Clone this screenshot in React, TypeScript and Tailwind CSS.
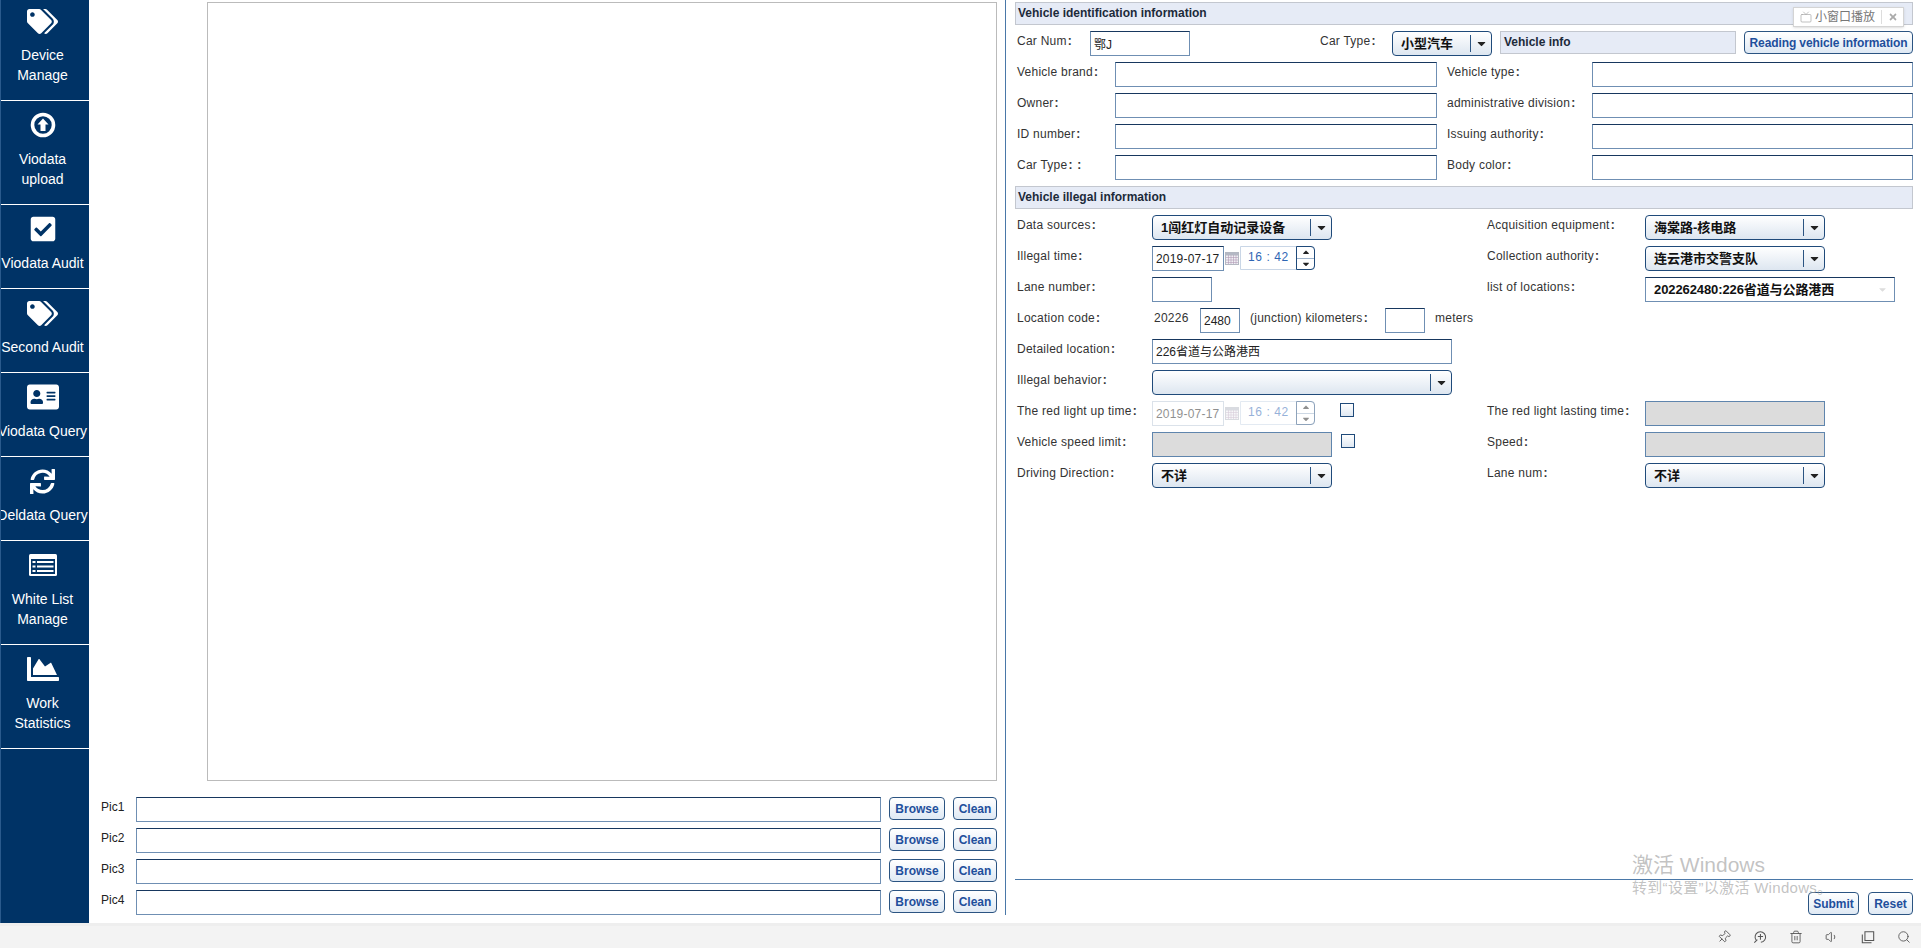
import React from "react";
import { FaTags, FaCheckSquare, FaAddressCard, FaSync, FaChartArea, FaCaretDown, FaCaretUp, FaTimes } from "react-icons/fa";
import { Pin, Trash2, Volume1, Search, Tv } from "lucide-react";

const RingUp = () => (
  <svg viewBox="0 0 26 26" className="w-[26px] h-[26px]">
    <circle cx="13" cy="13" r="10.5" fill="none" stroke="white" strokeWidth="3.6" />
    <path d="M13 6.5 L18.5 12.5 H15.5 V19 H10.5 V12.5 H7.5 Z" fill="white" />
  </svg>
);
const ListBox = () => (
  <svg viewBox="0 0 28 22" className="w-[28px] h-[22px]">
    <rect x="0" y="0" width="28" height="22" rx="1.5" fill="white" />
    <rect x="2" y="5" width="24" height="15" fill="#003366" />
    <path d="M3.5 7h3v2h-3zM8 7h16.500v2H8zM3.500 11.500h3v2h-3zM8 11.500h16.500v2H8zM3.500 16h3v2h-3zM8 16h16.500v2H8z" fill="white" />
  </svg>
);

const nav: { icon: React.ReactNode; lines: string[] }[] = [
  { icon: <FaTags size={31} />, lines: ["Device", "Manage"] },
  { icon: <RingUp />, lines: ["Viodata", "upload"] },
  { icon: <FaCheckSquare size={28} />, lines: ["Viodata Audit"] },
  { icon: <FaTags size={31} />, lines: ["Second Audit"] },
  { icon: <FaAddressCard size={32} />, lines: ["Viodata Query"] },
  { icon: <FaSync size={25} />, lines: ["Deldata Query"] },
  { icon: <ListBox />, lines: ["White List", "Manage"] },
  { icon: <FaChartArea size={32} />, lines: ["Work", "Statistics"] },
];

const inputCls = "h-[25px] border border-[#6f8fb3] border-t-[#17375e] bg-white px-[3px] text-[12px] leading-[25px] text-[#222] shrink-0";
const btnCls = "h-[23px] shrink-0 rounded-[4px] border border-[#2b5482] bg-gradient-to-b from-white to-[#dfe9f4] text-[12px] font-bold text-[#1f4f9c] text-center pt-px";

const Label = ({ w, children, className = "" }: { w: string; children: React.ReactNode; className?: string }) => (
  <div className={`${w} shrink-0 h-5 leading-5 text-[12px] text-[#333] tracking-[0.25px] whitespace-nowrap ${className}`}>{children}</div>
);
const Colon = () => <b className="ml-[1px]">:</b>;

const Select = ({ w, text = "" }: { w: string; text?: string }) => (
  <div className={`${w} h-[25px] shrink-0 flex items-center rounded-[4px] border border-[#1f4a7a] bg-gradient-to-b from-white to-[#dde6f0]`}>
    <div className="flex-1 pl-[8px] pt-px text-[13px] font-bold text-[#111] whitespace-nowrap overflow-hidden">{text}</div>
    <div className="w-[21px] h-[17px] border-l border-[#2b5482] flex items-center justify-center text-[#222]"><FaCaretDown size={13} /></div>
  </div>
);

const Calendar = () => (
  <svg viewBox="0 0 14 13" className="w-[14px] h-[13px] mx-[1px] mt-[6px]">
    <rect x="0.500" y="0.500" width="13" height="12" fill="#f0f0f4" stroke="#b4b8c2" />
    <rect x="1" y="1" width="12" height="2.500" fill="#b4b8c4" />
    <path d="M1 5.500h12M1 8h12M1 10.500h12M3.500 3v9M6 3v9M8.500 3v9M11 3v9" stroke="#b29ab6" strokeWidth="0.600" />
  </svg>
);

const DateTime = ({ dim }: { dim?: boolean }) => (
  <div className={`flex shrink-0 ${dim ? "opacity-50" : ""}`}>
    <div className={`w-[72px] h-[25px] border ${dim ? "border-[#b9c6d6]" : "border-[#6f8fb3] border-t-[#17375e]"} pl-[3px] text-[12px] leading-[25px] text-[#222] tracking-[0.2px] whitespace-nowrap`}>2019-07-17</div>
    <Calendar />
    <div className="w-[75px] h-[24px] flex border border-[#c9d6e6] rounded-r-[4px]">
      <div className="w-[55px] pl-[7px] text-[12px] leading-[20px] text-[#2f66b4] tracking-[0.6px] whitespace-pre">16 : 42</div>
      <div className="flex-1 -my-px -mr-px flex flex-col items-center justify-center border border-[#1f4a7a] rounded-r-[4px] text-[#222]">
        <div className="h-[11px] flex items-center"><FaCaretUp size={10} /></div>
        <div className="w-full h-px bg-[#9db2cb]" />
        <div className="h-[11px] flex items-center"><FaCaretDown size={10} /></div>
      </div>
    </div>
  </div>
);

const Check = () => <div className="w-[14px] h-[14px] mt-[2px] ml-[9px] border border-[#1f4a7a] bg-gradient-to-b from-white to-[#dfe8f2]" />;
const Disabled = ({ w }: { w: string }) => <div className={`${w} h-[25px] shrink-0 border border-[#5f85ad] bg-[#dcdcdc]`} />;

const Row = ({ left, right }: { left: React.ReactNode; right?: React.ReactNode }) => (
  <div className="flex h-[25px]">
    <div className="w-[472px] shrink-0 flex pl-[2px]">{left}</div>
    {right && <div className="flex">{right}</div>}
  </div>
);

const Header = ({ children }: { children: React.ReactNode }) => (
  <div className="h-[23px] border border-[#c3c7cf] bg-[#e6ebf6] pl-[2px] text-[12px] font-bold leading-[20px] text-[#1c2a3a]">{children}</div>
);

const TwoInputs = ({ a, b }: { a: React.ReactNode; b: React.ReactNode }) => (
  <div className="flex h-[25px] pl-[2px]">
    <Label w="w-[98px]">{a}</Label>
    <div className={`${inputCls} w-[322px]`} />
    <Label w="w-[145px]" className="ml-[10px]">{b}</Label>
    <div className={`${inputCls} w-[321px]`} />
  </div>
);

export default function App() {
  return (
    <div className="relative w-[1921px] h-[948px] overflow-hidden bg-white font-['Liberation_Sans','Noto_Sans_CJK_SC',sans-serif] flex flex-col">
      <div className="h-[923px] flex">
        <aside className="w-[89px] shrink-0 h-full overflow-hidden bg-[#003366] border-l border-[#2a5a8c] text-white">
          <div className="-mt-[3px]">
            {nav.map((n, i) => (
              <div key={i} className={`border-b border-white flex flex-col items-center pr-[5px] ${n.lines.length > 1 ? "h-[104px]" : "h-[84px]"}`}>
                <div className="h-[48px] w-full flex items-center justify-center shrink-0">{n.icon}</div>
                {n.lines.map((l) => (
                  <div key={l} className="h-5 leading-5 text-[14px] whitespace-nowrap flex justify-center w-full">{l}</div>
                ))}
              </div>
            ))}
          </div>
        </aside>

        <main className="w-[917px] shrink-0 h-[915px] pr-[8px] border-r border-[#4a78a8] pt-[2px] flex flex-col">
          <div className="self-end w-[790px] h-[779px] border border-[#bbbbbb]" />
          <div className="mt-[16px] flex flex-col gap-[6px]">
            {["Pic1", "Pic2", "Pic3", "Pic4"].map((p) => (
              <div key={p} className="flex h-[25px]">
                <div className="w-[47px] pl-[12px] h-5 leading-5 text-[12px] text-[#222] shrink-0">{p}</div>
                <div className={`${inputCls} w-[745px]`} />
                <button className={`${btnCls} w-[56px] ml-[8px]`}>Browse</button>
                <button className={`${btnCls} w-[44px] ml-[8px]`}>Clean</button>
              </div>
            ))}
          </div>
        </main>

        <section className="flex-1 h-[915px] pl-[9px] pr-[8px] pt-[2px] flex flex-col gap-[6px] min-w-0">
          <Header>Vehicle identification information</Header>
          <div className="flex h-[25px] pl-[2px]">
            <Label w="w-[73px]">Car Num<Colon /></Label>
            <div className={`${inputCls} w-[100px] leading-[26px] text-[#111]`}>鄂J</div>
            <Label w="w-[72px]" className="ml-[130px]">Car Type<Colon /></Label>
            <Select w="w-[100px]" text="小型汽车" />
            <div className="ml-[8px] w-[236px] h-[23px] border border-[#c3c7cf] bg-[#e6ebf6] pl-[3px] text-[12px] font-bold leading-[20px] text-[#1c2a3a]">Vehicle info</div>
            <button className={`${btnCls} w-[169px] ml-[8px] whitespace-nowrap tracking-[-0.1px]`}>Reading vehicle information</button>
          </div>
          <TwoInputs a={<>Vehicle brand<Colon /></>} b={<>Vehicle type<Colon /></>} />
          <TwoInputs a={<>Owner<Colon /></>} b={<>administrative division<Colon /></>} />
          <TwoInputs a={<>ID number<Colon /></>} b={<>Issuing authority<Colon /></>} />
          <TwoInputs a={<>Car Type<Colon /> <Colon /></>} b={<>Body color<Colon /></>} />
          <Header>Vehicle illegal information</Header>

          <Row
            left={<><Label w="w-[135px]">Data sources<Colon /></Label><Select w="w-[180px]" text="1闯红灯自动记录设备" /></>}
            right={<><Label w="w-[158px]">Acquisition equipment<Colon /></Label><Select w="w-[180px]" text="海棠路-核电路" /></>}
          />
          <Row
            left={<><Label w="w-[135px]">Illegal time<Colon /></Label><DateTime /></>}
            right={<><Label w="w-[158px]">Collection authority<Colon /></Label><Select w="w-[180px]" text="连云港市交警支队" /></>}
          />
          <Row
            left={<><Label w="w-[135px]">Lane number<Colon /></Label><div className={`${inputCls} w-[60px]`} /></>}
            right={<><Label w="w-[158px]">list of locations<Colon /></Label>
              <div className="w-[250px] h-[25px] border border-[#6f8fb3] border-t-[#17375e] flex items-center">
                <div className="flex-1 pl-[8px] pt-px text-[13px] font-bold text-[#111] whitespace-nowrap tracking-[-0.1px]">202262480:226省道与公路港西</div>
                <FaCaretDown size={11} className="text-[#dddddd] mr-[6px]" />
              </div></>}
          />
          <Row
            left={<>
              <Label w="w-[137px]">Location code<Colon /></Label>
              <Label w="w-[46px]">20226</Label>
              <div className={`${inputCls} w-[40px]`}>2480</div>
              <Label w="w-[135px]" className="ml-[10px]">(junction) kilometers<Colon /></Label>
              <div className={`${inputCls} w-[40px]`} />
              <Label w="w-[50px]" className="ml-[10px]">meters</Label>
            </>}
          />
          <Row left={<><Label w="w-[135px]">Detailed location<Colon /></Label><div className={`${inputCls} w-[300px]`}>226省道与公路港西</div></>} />
          <Row left={<><Label w="w-[135px]">Illegal behavior<Colon /></Label><Select w="w-[300px]" /></>} />
          <Row
            left={<><Label w="w-[135px]">The red light up time<Colon /></Label><DateTime dim /><div className="ml-[16px]"><Check /></div></>}
            right={<><Label w="w-[158px]">The red light lasting time<Colon /></Label><Disabled w="w-[180px]" /></>}
          />
          <Row
            left={<><Label w="w-[135px]">Vehicle speed limit<Colon /></Label><Disabled w="w-[180px]" /><Check /></>}
            right={<><Label w="w-[158px]">Speed<Colon /></Label><Disabled w="w-[180px]" /></>}
          />
          <Row
            left={<><Label w="w-[135px]">Driving Direction<Colon /></Label><Select w="w-[180px]" text="不详" /></>}
            right={<><Label w="w-[158px]">Lane num<Colon /></Label><Select w="w-[180px]" text="不详" /></>}
          />

          <div className="flex-1" />
          <div className="border-t border-[#4a78a8]" />
          <div className="flex justify-end gap-[9px] mt-[6px]">
            <button className={`${btnCls} w-[51px]`}>Submit</button>
            <button className={`${btnCls} w-[45px]`}>Reset</button>
          </div>
        </section>
      </div>

      <footer className="h-[25px] bg-[#f3f3f3] border-t-[3px] border-[#eeeeee] flex items-center justify-end gap-[22px] pr-[10px] text-[#555]">
        <Pin size={14} strokeWidth={1.5} className="rotate-45" />
        <svg viewBox="0 0 16 16" className="w-[14px] h-[14px]" fill="none" stroke="currentColor" strokeWidth="1.200">
          <path d="M3.500 11.500A6 6 0 1 1 9 14M8.500 4.500v6.500M5.500 7.500h6M1.500 14.500L5 11" />
        </svg>
        <Trash2 size={14} strokeWidth={1.5} />
        <Volume1 size={14} strokeWidth={1.5} />
        <svg viewBox="0 0 16 16" className="w-[14px] h-[14px]" fill="none" stroke="currentColor" strokeWidth="1.200">
          <path d="M4.500 2h10v10h-10zM1.500 5v9.500H12" />
        </svg>
        <Search size={14} strokeWidth={1.5} />
      </footer>

      <div className="absolute left-[1793px] top-[7px] w-[111px] h-[20px] bg-white border border-[#d4d4d4] shadow-sm flex items-center text-[#777] text-[12px]">
        <Tv size={12} strokeWidth={1.2} className="ml-[6px] text-[#999]" />
        <span className="ml-[3px] whitespace-nowrap">小窗口播放</span>
        <span className="ml-[6px] h-[14px] border-l border-[#ddd]" />
        <FaTimes size={10} className="ml-[6px] text-[#aaa]" />
      </div>

      <div className="absolute left-[1632px] top-[851px] pointer-events-none text-[#9a9a9a]/60 whitespace-nowrap">
        <div className="text-[21px] leading-[27px]">激活 Windows</div>
        <div className="text-[15px] leading-[20px] tracking-[0.3px]">转到“设置”以激活 Windows。</div>
      </div>
    </div>
  );
}
